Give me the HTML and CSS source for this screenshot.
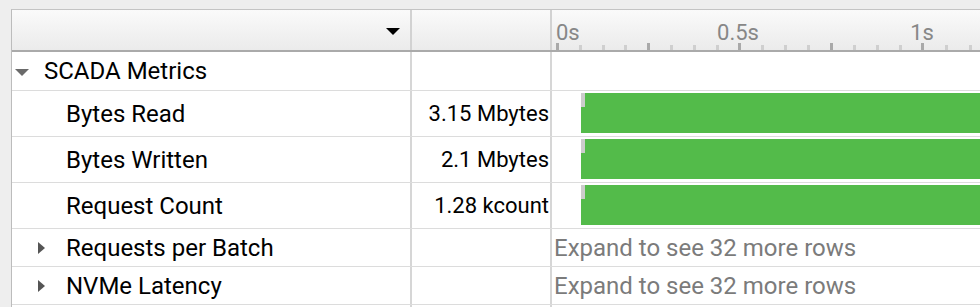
FILE: index.html
```html
<!DOCTYPE html>
<html lang="en">
<head>
    <meta charset="UTF-8">
    <title>Metrics</title>
    <link rel="stylesheet" href="styles.css">
</head>
<body>
    <div class="tree-table">
        <div class="row header-row">
            <div class="cell name-cell header-cell">
                <span class="sort-arrow"></span>
            </div>
            <div class="cell value-cell header-cell"></div>
            <div class="cell chart-cell header-cell">
                <svg class="axis" width="428" height="40" viewBox="0 0 428 40">
                    <g fill="#878787" font-family="Roboto, sans-serif" font-size="22">
                        <text x="4" y="30">0s</text>
                        <text x="186" y="30" text-anchor="middle">0.5s</text>
                        <text x="370" y="30" text-anchor="middle">1s</text>
                    </g>
                    <g fill="#a9a9a9">
                        <rect x="4" y="33" width="3" height="7"/>
                        <rect x="95" y="33" width="3" height="7"/>
                        <rect x="186" y="33" width="3" height="7"/>
                        <rect x="278" y="33" width="3" height="7"/>
                        <rect x="369" y="33" width="3" height="7"/>
                    </g>
                    <g fill="#cfcfcf">
                        <rect x="27" y="35" width="3" height="5"/>
                        <rect x="50" y="35" width="3" height="5"/>
                        <rect x="72" y="35" width="3" height="5"/>
                        <rect x="118" y="35" width="3" height="5"/>
                        <rect x="141" y="35" width="3" height="5"/>
                        <rect x="164" y="35" width="3" height="5"/>
                        <rect x="209" y="35" width="3" height="5"/>
                        <rect x="232" y="35" width="3" height="5"/>
                        <rect x="255" y="35" width="3" height="5"/>
                        <rect x="301" y="35" width="3" height="5"/>
                        <rect x="324" y="35" width="3" height="5"/>
                        <rect x="347" y="35" width="3" height="5"/>
                        <rect x="393" y="35" width="3" height="5"/>
                        <rect x="417" y="35" width="3" height="5"/>
                    </g>
                </svg>
            </div>
        </div>

        <div class="row group-row first">
            <div class="cell name-cell"><span class="toggle open"></span>SCADA Metrics</div>
            <div class="cell value-cell"></div>
            <div class="cell chart-cell"></div>
        </div>

        <div class="row metric-row">
            <div class="cell name-cell leaf">Bytes Read</div>
            <div class="cell value-cell">3.15 Mbytes</div>
            <div class="cell chart-cell bar-cell"><div class="bar"></div></div>
        </div>
        <div class="row metric-row">
            <div class="cell name-cell leaf">Bytes Written</div>
            <div class="cell value-cell">2.1 Mbytes</div>
            <div class="cell chart-cell bar-cell"><div class="bar"></div></div>
        </div>
        <div class="row metric-row">
            <div class="cell name-cell leaf">Request Count</div>
            <div class="cell value-cell">1.28 kcount</div>
            <div class="cell chart-cell bar-cell"><div class="bar"></div></div>
        </div>

        <div class="row group-row">
            <div class="cell name-cell sub"><span class="toggle closed"></span>Requests per Batch</div>
            <div class="cell value-cell"></div>
            <div class="cell chart-cell hint">Expand to see 32 more rows</div>
        </div>
        <div class="row group-row">
            <div class="cell name-cell sub"><span class="toggle closed"></span>NVMe Latency</div>
            <div class="cell value-cell"></div>
            <div class="cell chart-cell hint">Expand to see 32 more rows</div>
        </div>
        <div class="row filler-row">
            <div class="cell name-cell"></div>
            <div class="cell value-cell"></div>
            <div class="cell chart-cell"></div>
        </div>
    </div>
</body>
</html>
```

FILE: styles.css
```css
* {
    margin: 0;
    padding: 0;
    box-sizing: border-box;
}

body {
    font-family: Roboto, "Liberation Sans", sans-serif;
    background: #eeeeee;
    padding: 9px 0 0 11px;
    height: 307px;
    overflow: hidden;
    color: #000;
}

.tree-table {
    background: #fff;
    border-left: 1px solid #bcbcbc;
    border-top: 1px solid #c4c4c4;
    font-size: 24px;
}

.row {
    display: grid;
    grid-template-columns: 400px 140px 1fr;
    border-bottom: 1px solid #dcdcdc;
}

.cell {
    display: flex;
    align-items: center;
    white-space: nowrap;
    overflow: hidden;
}

.name-cell,
.value-cell {
    border-right: 2px solid #d6d6d6;
}

.header-row {
    height: 42px;
    border-bottom: 2px solid #aaaaaa;
    background: linear-gradient(#fafafa, #ebebeb);
}

.header-cell {
    align-items: stretch;
}

.header-row .name-cell,
.header-row .value-cell {
    border-right-color: #d2d2d2;
}

.header-row .name-cell {
    justify-content: flex-end;
    align-items: center;
    padding-right: 10px;
}

.sort-arrow {
    width: 0;
    height: 0;
    border-left: 7px solid transparent;
    border-right: 7px solid transparent;
    border-top: 7px solid #000;
    margin-top: 3px;
}

.axis {
    display: block;
}

.group-row {
    height: 38px;
}

.group-row.first {
    height: 39px;
}

.metric-row {
    height: 46px;
}

.filler-row {
    height: 2px;
    border-bottom: none;
}

.name-cell {
    padding-left: 3px;
}

.name-cell.leaf {
    padding-left: 54px;
}

.name-cell.sub {
    padding-left: 26px;
}

.toggle {
    display: inline-block;
    width: 0;
    height: 0;
}

.toggle.open {
    border-left: 7.5px solid transparent;
    border-right: 7.5px solid transparent;
    border-top: 7px solid #6a6a6a;
    margin: 2px 15px 0 0;
}

.toggle.closed {
    border-top: 6px solid transparent;
    border-bottom: 6px solid transparent;
    border-left: 7px solid #555555;
    margin: 1px 21px 0 0;
}

.value-cell {
    justify-content: flex-end;
    padding-right: 1px;
    font-size: 22px;
}

.bar-cell {
    align-items: flex-start;
    padding: 2px 0 0 29px;
}

.bar {
    position: relative;
    width: 100%;
    height: 40px;
    background: #53bb4a;
}

.bar::before {
    content: "";
    position: absolute;
    left: 0;
    top: 0;
    width: 4px;
    height: 14px;
    background: #cccccc;
}

.hint {
    color: #7b7b7b;
    padding-left: 2px;
}
```
